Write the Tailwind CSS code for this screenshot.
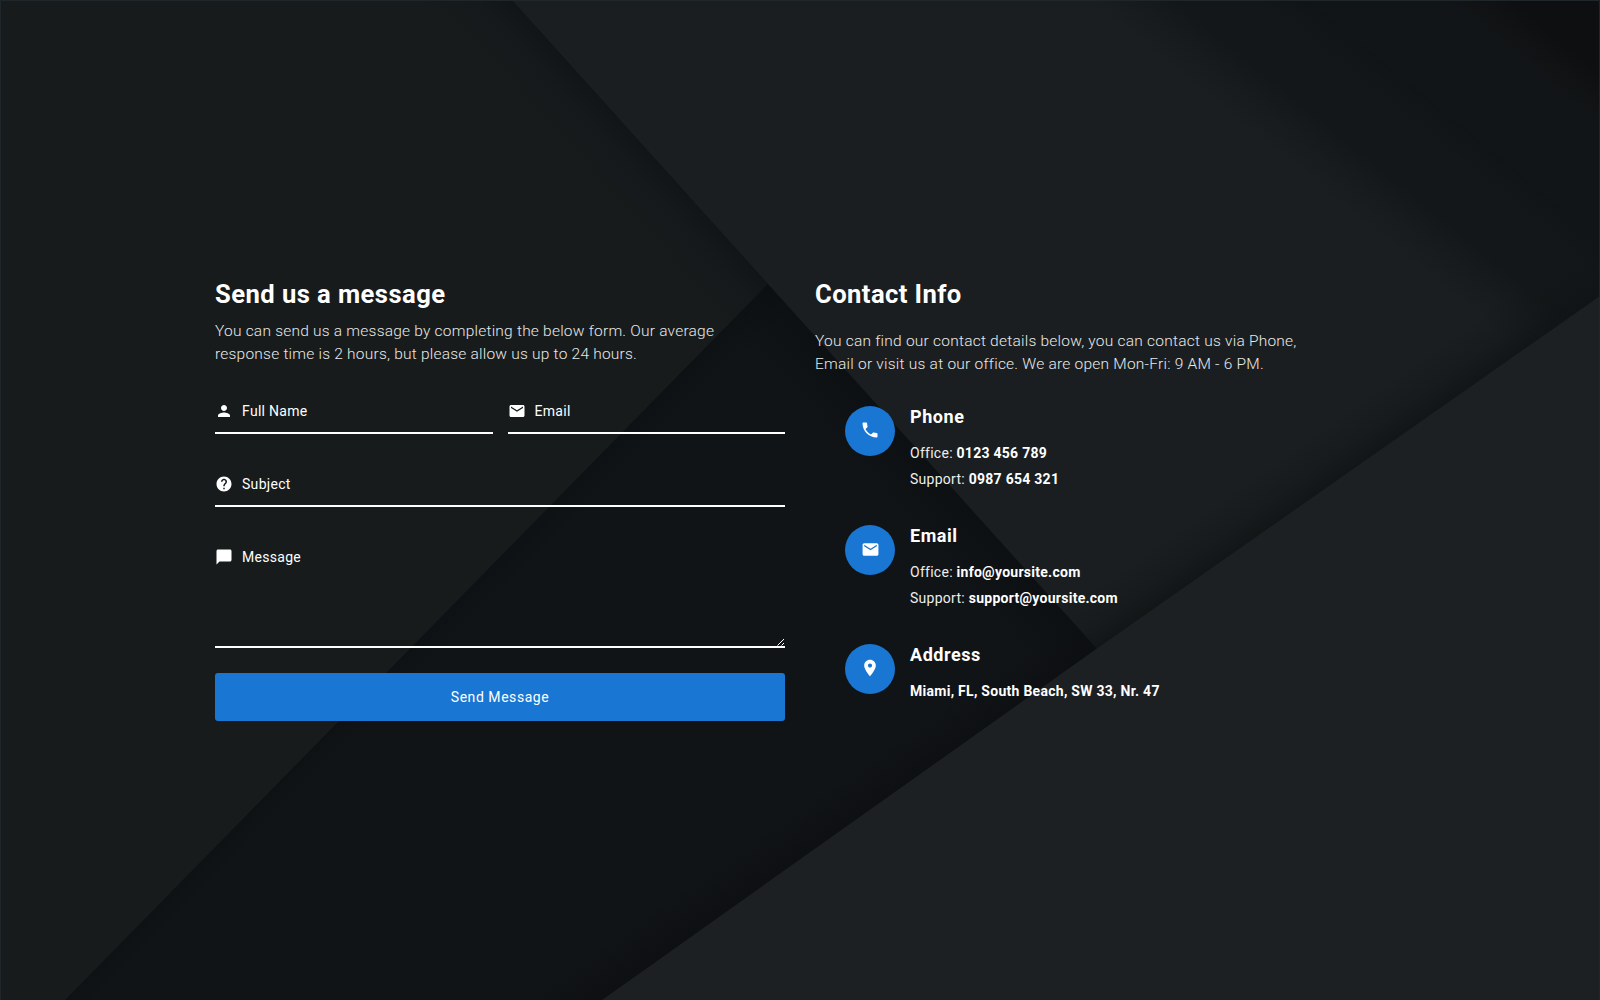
<!DOCTYPE html>
<html lang="en">
<head>
<meta charset="utf-8">
<title>Contact</title>
<script src="https://cdn.jsdelivr.net/npm/@tailwindcss/browser@4"></script>
</head>
<body class="relative h-[1000px] w-[1600px] overflow-hidden bg-[#171b1c] font-[Roboto,sans-serif] text-white">
  <!-- Layered paper backdrop; each gradient runs perpendicular to the edge it shades -->
  <svg class="absolute inset-0" width="1600" height="1000" viewBox="0 0 1600 1000" aria-hidden="true">
    <defs>
      <linearGradient id="shadeLeft" gradientUnits="userSpaceOnUse" x1="640" y1="142" x2="588" y2="189"><stop stop-color="#111517"/><stop offset=".35" stop-color="#15191b"/><stop offset="1" stop-color="#171b1c"/></linearGradient>
      <linearGradient id="shadeRamp" gradientUnits="userSpaceOnUse" x1="933" y1="465" x2="888" y2="505"><stop stop-color="#0d1012"/><stop offset="1" stop-color="#111417"/></linearGradient>
      <linearGradient id="shadeRampLow" gradientUnits="userSpaceOnUse" x1="1099" y1="647" x2="1076" y2="614"><stop stop-color="#0c0e10" stop-opacity=".7"/><stop offset="1" stop-color="#0c0e10" stop-opacity="0"/></linearGradient>
      <linearGradient id="shadeRampDiag" gradientUnits="userSpaceOnUse" x1="416" y1="642" x2="437" y2="663"><stop stop-color="#0c0f12" stop-opacity=".5"/><stop offset="1" stop-color="#0c0f12" stop-opacity="0"/></linearGradient>
      <linearGradient id="band" gradientUnits="userSpaceOnUse" x1="1112" y1="20" x2="1147" y2="-23"><stop stop-color="#1a1e20"/><stop offset=".5" stop-color="#171b1d"/><stop offset="1" stop-color="#131719"/></linearGradient>
      <linearGradient id="stripe" gradientUnits="userSpaceOnUse" x1="1307" y1="0" x2="1286" y2="26"><stop stop-color="#0f1315" stop-opacity=".7"/><stop offset="1" stop-color="#0f1315" stop-opacity="0"/></linearGradient>
      <linearGradient id="corner" gradientUnits="userSpaceOnUse" x1="1463" y1="15" x2="1490" y2="-18"><stop stop-color="#121517"/><stop offset="1" stop-color="#0e0f10"/></linearGradient>
      <linearGradient id="shadeUpper" gradientUnits="userSpaceOnUse" x1="1099" y1="647" x2="1070" y2="606"><stop stop-color="#101314" stop-opacity=".75"/><stop offset=".4" stop-color="#101314" stop-opacity=".3"/><stop offset="1" stop-color="#101314" stop-opacity="0"/></linearGradient>
    </defs>
    <path fill="url(#shadeLeft)" d="M0 0H520L776 284L65 1000H0Z"/>
    <path fill="url(#shadeRamp)" d="M768 284L1103 651L606 1000H65Z"/>
    <path fill="url(#shadeRampLow)" d="M768 284L1103 651L606 1000H65Z"/>
    <path fill="url(#shadeRampDiag)" d="M768 284L1103 651L606 1000H65Z"/>
    <path fill="#1a1e20" d="M512 0H1600V300L1099 651Z"/>
    <path fill="url(#band)" d="M1080 0H1600V300L1480 384Z"/>
    <path fill="url(#stripe)" d="M1200 0H1307L1600 240V300L1540 330Z"/>
    <path fill="#121517" d="M1307 0L1600 240V0Z"/>
    <path fill="url(#corner)" d="M1430 0H1600V140Z"/>
    <path fill="url(#shadeUpper)" d="M512 0H1600V300L1099 651Z"/>
    <path fill="#1c2023" d="M1600 296V1000H602L1099 647Z"/>
    <path d="M.5 1000V.5H1599.5V1000" fill="none" stroke="#20272a"/>
  </svg>

  <svg class="hidden">
    <symbol id="person" viewBox="0 0 24 24"><path d="M12 12c2.21 0 4-1.79 4-4s-1.79-4-4-4-4 1.79-4 4 1.79 4 4 4zm0 2c-2.67 0-8 1.34-8 4v2h16v-2c0-2.66-5.33-4-8-4z"/></symbol>
    <symbol id="mail" viewBox="0 0 24 24"><path d="M20 4H4c-1.1 0-1.99.9-1.99 2L2 18c0 1.1.9 2 2 2h16c1.1 0 2-.9 2-2V6c0-1.1-.9-2-2-2zm0 4l-8 5-8-5V6l8 5 8-5v2z"/></symbol>
    <symbol id="help" viewBox="0 0 24 24"><path d="M12 2C6.480 2 2 6.480 2 12s4.480 10 10 10 10-4.480 10-10S17.520 2 12 2zm1 17h-2v-2h2v2zm2.070-7.750l-.9.920C13.450 12.900 13 13.500 13 15h-2v-.5c0-1.100.45-2.100 1.170-2.830l1.240-1.260c.37-.36.59-.86.59-1.410 0-1.100-.9-2-2-2s-2 .9-2 2H8c0-2.210 1.790-4 4-4s4 1.790 4 4c0 .88-.36 1.680-.93 2.250z"/></symbol>
    <symbol id="chat" viewBox="0 0 24 24"><path d="M20 2H4c-1.100 0-2 .9-2 2v18l4-4h14c1.100 0 2-.9 2-2V4c0-1.100-.9-2-2-2z"/></symbol>
    <symbol id="phone" viewBox="0 0 24 24"><path d="M6.620 10.790c1.440 2.830 3.760 5.140 6.590 6.590l2.200-2.200c.27-.27.67-.36 1.020-.24 1.120.37 2.330.57 3.570.57.55 0 1 .45 1 1V20c0 .55-.45 1-1 1-9.390 0-17-7.610-17-17 0-.55.45-1 1-1h3.500c.55 0 1 .45 1 1 0 1.250.2 2.450.57 3.570.11.35.03.74-.25 1.020l-2.200 2.200z"/></symbol>
    <symbol id="pin" viewBox="0 0 24 24"><path d="M12 2C8.130 2 5 5.130 5 9c0 5.250 7 13 7 13s7-7.750 7-13c0-3.870-3.130-7-7-7zm0 9.500c-1.380 0-2.500-1.120-2.500-2.500s1.120-2.500 2.500-2.500 2.500 1.120 2.500 2.500-1.120 2.500-2.500 2.500z"/></symbol>
  </svg>

  <main class="relative mx-auto grid w-[1170px] grid-cols-2 gap-[30px] pt-[278px]">
    <section>
      <h2 class="h-8 text-[25.6px] leading-8 font-bold tracking-[0.44px]">Send us a message</h2>
      <p class="mt-[10px] text-[15.5px] leading-[23px] font-light tracking-[0.22px] whitespace-nowrap text-[#e8e9e9]">You can send us a message by completing the below form. Our average<br>response time is 2 hours, but please allow us up to 24 hours.</p>
      <form class="mt-[24px] text-sm tracking-[0.3px]">
        <div class="flex gap-[15px]">
          <label class="flex h-[44px] flex-1 items-center gap-[9px] border-b-2 border-white"><svg class="size-[18px] fill-white"><use href="#person"/></svg>Full Name</label>
          <label class="flex h-[44px] flex-1 items-center gap-[9px] border-b-2 border-white"><svg class="size-[18px] fill-white"><use href="#mail"/></svg>Email</label>
        </div>
        <label class="mt-[29px] flex h-[44px] items-center gap-[9px] border-b-2 border-white"><svg class="size-[18px] fill-white"><use href="#help"/></svg>Subject</label>
        <label class="relative mt-[29px] flex h-[112px] items-start gap-[9px] border-b-2 border-white pt-[11px]"><svg class="mt-px size-[18px] fill-white"><use href="#chat"/></svg>Message
          <svg class="absolute right-0 bottom-0 stroke-white" width="8" height="8" viewBox="0 0 8 8"><path d="M.5 7.500L7 1M4.500 7.500L7 5"/></svg>
        </label>
        <button type="button" class="mt-[25px] h-12 w-full rounded-[3px] bg-[#1976d2] tracking-[0.55px]">Send Message</button>
      </form>
    </section>

    <section>
      <h2 class="h-8 text-[25.6px] leading-8 font-bold tracking-[0.42px]">Contact Info</h2>
      <p class="mt-[20px] text-[15.5px] leading-[23px] font-light tracking-[0.23px] whitespace-nowrap text-[#e8e9e9]">You can find our contact details below, you can contact us via Phone,<br>Email or visit us at our office. We are open Mon-Fri: 9 AM - 6 PM.</p>
      <ul class="mt-[30px] ml-[30px] text-sm tracking-[0.27px]">
        <li class="flex h-[119px] gap-[15px]">
          <span class="grid size-[50px] place-items-center rounded-full bg-[#1976d2] pb-0.5"><svg class="size-5 fill-white"><use href="#phone"/></svg></span>
          <div><h3 class="text-lg leading-[22px] font-bold tracking-[0.55px]">Phone</h3>
          <p class="mt-3 leading-[26px] text-[#eee]">Office: <b class="text-white">0123 456 789</b><br>Support: <b class="text-white">0987 654 321</b></p></div>
        </li>
        <li class="flex h-[119px] gap-[15px]">
          <span class="grid size-[50px] place-items-center rounded-full bg-[#1976d2] pb-px"><svg class="size-[19px] fill-white"><use href="#mail"/></svg></span>
          <div><h3 class="text-lg leading-[22px] font-bold tracking-[0.55px]">Email</h3>
          <p class="mt-3 leading-[26px] text-[#eee]">Office: <b class="text-white">info@yoursite.com</b><br>Support: <b class="text-white">support@yoursite.com</b></p></div>
        </li>
        <li class="flex gap-[15px]">
          <span class="grid size-[50px] place-items-center rounded-full bg-[#1976d2] pb-0.5"><svg class="size-5 fill-white"><use href="#pin"/></svg></span>
          <div><h3 class="text-lg leading-[22px] font-bold tracking-[0.55px]">Address</h3>
          <p class="mt-3 leading-[26px] font-bold">Miami, FL, South Beach, SW 33, Nr. 47</p></div>
        </li>
      </ul>
    </section>
  </main>
</body>
</html>
